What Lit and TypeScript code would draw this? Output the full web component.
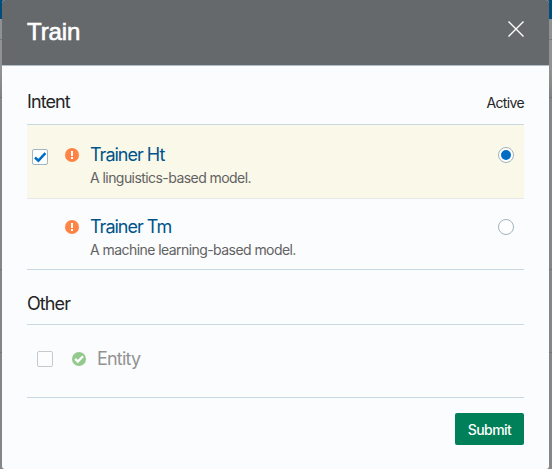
import { LitElement, html, css, svg, nothing } from "lit";
import { customElement, property, state } from "lit/decorators.js";
import { classMap } from "lit/directives/class-map.js";

interface Trainer {
  id: string;
  name: string;
  description: string;
  checked: boolean;
}

@customElement("status-icon")
class StatusIcon extends LitElement {
  @property() kind: "warning" | "done" = "warning";

  static styles = css`
    :host { display: block; width: 14px; height: 14px; }
    svg { display: block; }
  `;

  render() {
    return html`<svg width="14" height="14" viewBox="0 0 14 14">
      ${this.kind === "warning"
        ? svg`<circle cx="7" cy="7" r="7" fill="#ff8345"/>
              <path d="M6 2.9h2v5.2H6zM6 9.1h2v2H6z" fill="#fff"/>`
        : svg`<circle cx="7" cy="7" r="7" fill="#93c98c"/>
              <path d="M3.1 6.9l2.7 2.7 5.2-5.3" fill="none" stroke="#fff" stroke-width="2.3"/>`}
    </svg>`;
  }
}

@customElement("check-box")
class CheckBox extends LitElement {
  @property({ type: Boolean }) checked = false;
  @property({ type: Boolean, reflect: true }) disabled = false;

  static styles = css`
    :host {
      display: block; box-sizing: border-box; width: 16px; height: 16px;
      border: 1px solid #a2b5c2; border-radius: 2px; background: #fff;
    }
    :host([disabled]) { border-color: #c8c9cb; background: #fdfdfe; }
    svg { display: block; }
  `;

  render() {
    return this.checked
      ? html`<svg width="14" height="14" viewBox="0 0 14 14">
          <path d="M2 7.5l3.4 3.2L12.4 3.2" fill="none" stroke="#006dc5" stroke-width="2.5"/>
        </svg>`
      : nothing;
  }
}

@customElement("app-root")
class AppRoot extends LitElement {
  @state() private active = "ht";
  @state() private trainers: Trainer[] = [
    { id: "ht", name: "Trainer Ht", description: "A linguistics-based model.", checked: true },
    { id: "tm", name: "Trainer Tm", description: "A machine learning-based model.", checked: false },
  ];

  static styles = css`
    :host {
      display: block; box-sizing: border-box; width: 552px; height: 469px;
      padding: 0 3px 0 2px; overflow: hidden;
      font-family: Inter, "Liberation Sans", sans-serif; color: #252525;
      background: linear-gradient(#004c7a 0 19px, #909192 19px 39px, #777879 39px 40px, #929292 40px 70px, #818283 97px, #747576 97px 98px, #858687 98px 269px, #747576 269px 270px, #858687 270px 352px, #747576 352px 353px, #858687 353px);
    }
    .dialog {
      box-sizing: border-box; height: 469px; display: flex; flex-direction: column;
      background: #fbfcfe; border-radius: 3px; overflow: hidden;
    }
    header {
      box-sizing: border-box; height: 66px; padding: 0 25px; flex: none;
      display: flex; justify-content: space-between;
      background: #65696c; border-bottom: 1px solid #b2bfc8; color: #fff;
    }
    h1 {
      margin: 16px 0 0; font: 400 24px/32px "Liberation Sans", sans-serif;
      letter-spacing: -0.1px; -webkit-text-stroke: 0.6px #fff;
    }
    .close { margin-top: 21px; width: 16px; height: 16px; }
    main { padding: 0 25px; display: flex; flex-direction: column; }
    .section {
      box-sizing: border-box; display: flex; justify-content: space-between; align-items: flex-end;
      border-bottom: 1px solid #c8d9e1;
    }
    .intent { height: 59px; padding-bottom: 10px; }
    .other { height: 55px; padding-bottom: 8px; }
    h2 { margin: 0; font-weight: 400; font-size: 18px; line-height: 24px; letter-spacing: -0.9px; }
    .col { font-size: 14px; line-height: 22px; letter-spacing: -0.65px; }
    .row {
      box-sizing: border-box; display: flex; align-items: flex-start;
      border-bottom: 1px solid #c8d6df; height: 71px; padding: 0 10px 0 5px;
    }
    .row.selected { background: #faf8e9; height: 74px; border-bottom-color: #e8e8e8; }
    .pick { width: 33px; padding-top: 24px; box-sizing: border-box; }
    .selected status-icon { margin-top: 23px; }
    status-icon { margin-top: 21px; }
    .text { flex: 1; padding: 16px 0 0 11px; }
    .selected .text { padding-top: 18px; }
    .name { font-size: 18px; line-height: 24px; letter-spacing: -1px; color: #00548a; }
    .desc { font-size: 14px; line-height: 20px; margin-top: 1px; letter-spacing: -0.56px; color: #626262; }
    .radio {
      box-sizing: border-box; width: 16px; height: 16px; margin-top: 20px;
      border: 1px solid #a2b1bc; border-radius: 50%; background: #fff;
      display: grid; place-items: center;
    }
    .selected .radio { margin-top: 22px; }
    .on::after { content: ""; width: 10px; height: 10px; border-radius: 50%; background: #006dc5; }
    .entity { height: 73px; padding-left: 10px; }
    .entity .pick { width: 35px; padding-top: 26px; }
    .entity status-icon { margin-top: 27px; }
    .entity .name { margin: 22px 0 0 11px; letter-spacing: -0.8px; color: #939393; }
    footer { display: flex; justify-content: flex-end; padding-top: 15px; }
    button {
      width: 69px; height: 32px; padding: 2px 0 0; border: 0; border-radius: 2px;
      background: #008059; color: #fff; font: 500 14px/20px Inter, sans-serif; letter-spacing: -0.55px;
    }
  `;

  private row(t: Trainer) {
    return html`<div class=${classMap({ row: true, selected: t.checked })}>
      <div class="pick">${t.checked ? html`<check-box checked></check-box>` : nothing}</div>
      <status-icon kind="warning"></status-icon>
      <div class="text">
        <div class="name">${t.name}</div>
        <div class="desc">${t.description}</div>
      </div>
      <div class=${classMap({ radio: true, on: this.active === t.id })} @click=${() => (this.active = t.id)}></div>
    </div>`;
  }

  render() {
    return html`<div class="dialog">
      <header>
        <h1>Train</h1>
        <svg class="close" viewBox="0 0 16 16"><path d="M.5.5l15 15M15.5.5l-15 15" stroke="#fff" stroke-width="1.4"/></svg>
      </header>
      <main>
        <div class="section intent"><h2>Intent</h2><span class="col">Active</span></div>
        ${this.trainers.map((t) => this.row(t))}
        <div class="section other"><h2>Other</h2></div>
        <div class="row entity">
          <div class="pick"><check-box disabled></check-box></div>
          <status-icon kind="done"></status-icon>
          <div class="name">Entity</div>
        </div>
        <footer><button>Submit</button></footer>
      </main>
    </div>`;
  }
}
